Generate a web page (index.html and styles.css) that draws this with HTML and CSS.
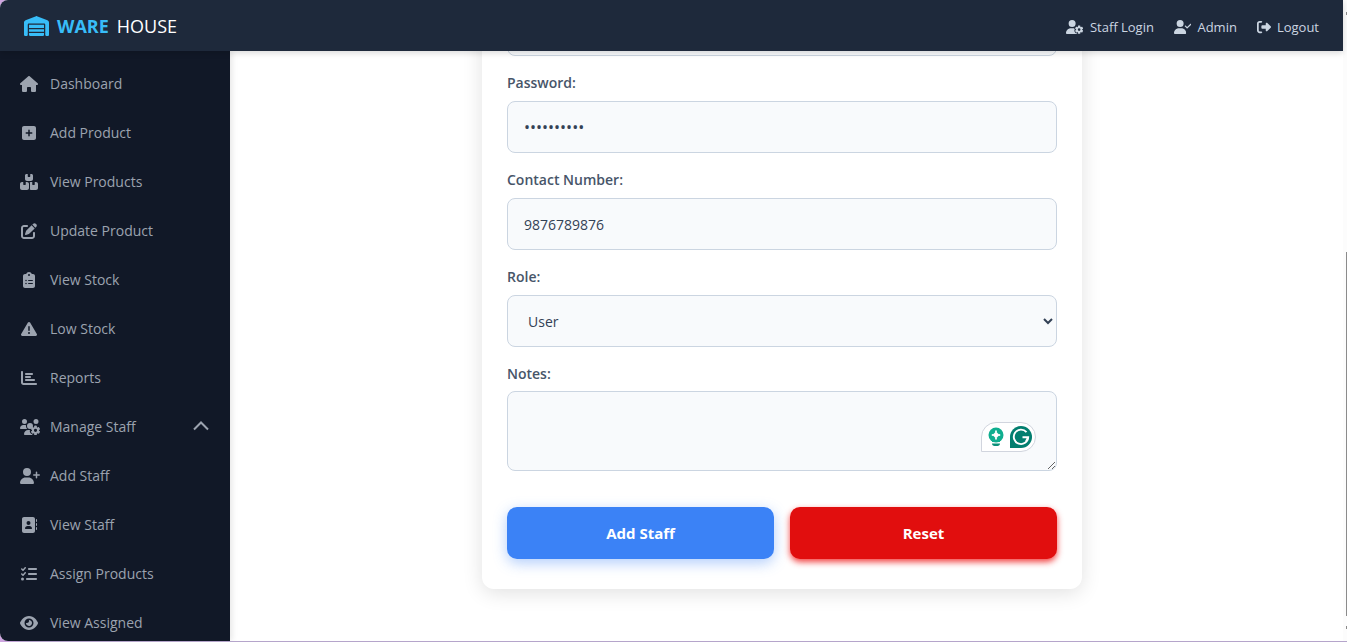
FILE: index.html
```html
<!DOCTYPE html>
<html lang="en">
<head>
<meta charset="utf-8">
<title>Ware House - Add Staff</title>
<link rel="stylesheet" href="styles.css">
</head>
<body>
<svg class="defs" aria-hidden="true">
  <symbol id="head" viewBox="0 0 448 512"><path d="M96 128a128 128 0 1 1 256 0A128 128 0 1 1 96 128zM0 482.3C0 383.8 79.8 304 178.3 304h91.4C368.2 304 448 383.8 448 482.3c0 16.4-13.3 29.7-29.7 29.7H29.7C13.3 512 0 498.7 0 482.3z"/></symbol>
  <path id="gear" d="M436 218.2c0-7 4.5-13.3 11.3-14.8c10.5-2.4 21.5-3.7 32.7-3.7s22.2 1.3 32.7 3.7c6.8 1.5 11.3 7.8 11.3 14.8v30.6c7.9 3.4 15.4 7.7 22.3 12.8l24.9-14.3c6.1-3.5 13.7-2.7 18.5 2.4c7.6 8.1 14.3 17.2 20.1 27.2s10.3 20.4 13.5 31c2.1 6.7-1.1 13.7-7.2 17.2l-25 14.4c.4 4 .7 8.1 .7 12.3s-.2 8.2-.7 12.3l25 14.4c6.1 3.5 9.2 10.5 7.2 17.2c-3.3 10.6-7.8 21-13.5 31s-12.5 19.1-20.1 27.2c-4.8 5.1-12.5 5.9-18.5 2.4l-24.9-14.3c-6.9 5.1-14.3 9.4-22.3 12.8l0 30.6c0 7-4.5 13.3-11.3 14.8c-10.5 2.4-21.5 3.7-32.7 3.7s-22.2-1.3-32.7-3.7c-6.8-1.5-11.3-7.8-11.3-14.8V454.8c-8-3.4-15.6-7.7-22.5-12.9l-24.7 14.3c-6.1 3.5-13.7 2.7-18.5-2.4c-7.6-8.1-14.3-17.2-20.1-27.2s-10.3-20.4-13.5-31c-2.1-6.7 1.1-13.7 7.2-17.2l24.8-14.3c-.4-4.1-.7-8.2-.7-12.4s.2-8.3 .7-12.4L343.8 325c-6.1-3.5-9.2-10.5-7.2-17.2c3.3-10.6 7.7-21 13.5-31s12.5-19.1 20.1-27.2c4.8-5.1 12.4-5.9 18.5-2.4l24.8 14.3c6.9-5.1 14.5-9.4 22.5-12.9V218.2zm92.1 133.5a48.1 48.1 0 1 0 -96.1 0 48.1 48.1 0 1 0 96.1 0z"/>
</svg>
<div class="window">
  <div class="page">
    <header class="topbar">
      <a class="brand" href="#">
        <svg class="brand-icon" viewBox="0 0 640 512"><path d="M0 488V171.3c0-26.2 15.9-49.7 40.2-59.4L308.1 4.8c7.6-3.1 16.1-3.1 23.8 0L599.8 111.9c24.3 9.7 40.2 33.3 40.2 59.4V488c0 13.3-10.7 24-24 24H568c-13.3 0-24-10.7-24-24V224c0-17.7-14.3-32-32-32H128c-17.7 0-32 14.3-32 32V488c0 13.3-10.7 24-24 24H24c-13.3 0-24-10.7-24-24zm488 24l-336 0c-13.3 0-24-10.7-24-24V432H512l0 56c0 13.3-10.7 24-24 24zM128 400V336H512v64H128zm0-96V224H512v80H128z"/></svg>
        <span class="brand-ware">WARE</span>
        <span class="brand-house">HOUSE</span>
      </a>
      <nav class="account">
        <a href="#"><svg viewBox="0 0 640 512"><path d="M224 0a128 128 0 1 1 0 256A128 128 0 1 1 224 0zM178.3 304h91.4c11.8 0 23.4 1.2 34.5 3.3c-2.1 18.5 7.4 35.6 21.8 44.8c-16.6 10.6-26.7 31.6-20 53.3c4 12.9 9.4 25.5 16.4 37.6s15.2 23.1 24.4 33c15.7 16.9 39.6 18.4 57.2 8.7v.9c0 9.2 2.7 18.5 7.9 26.3H29.7C13.3 512 0 498.7 0 482.3C0 383.8 79.8 304 178.3 304z"/><use href="#gear"/></svg><span>Staff Login</span></a>
        <a href="#"><svg viewBox="0 0 640 512"><use href="#head" width="448" height="512"/><path d="M625 177L497 305c-9.4 9.4-24.6 9.4-33.9 0l-64-64c-9.4-9.4-9.4-24.6 0-33.9s24.6-9.4 33.9 0l47 47L591 143c9.4-9.4 24.6-9.4 33.9 0s9.4 24.6 0 33.9z"/></svg><span>Admin</span></a>
        <a href="#"><svg viewBox="0 0 512 512"><path d="M377.9 105.9L500.7 228.7c7.2 7.2 11.3 17.1 11.3 27.3s-4.1 20.1-11.3 27.3L377.9 406.1c-6.4 6.4-15 9.9-24 9.9c-18.7 0-33.9-15.2-33.9-33.9l0-62.1-128 0c-17.7 0-32-14.3-32-32l0-64c0-17.7 14.3-32 32-32l128 0 0-62.1c0-18.7 15.2-33.9 33.9-33.9c9 0 17.6 3.6 24 9.9zM160 96L96 96c-17.7 0-32 14.3-32 32l0 256c0 17.7 14.3 32 32 32l64 0c17.7 0 32 14.3 32 32s-14.3 32-32 32l-64 0c-53 0-96-43-96-96L0 128C0 75 43 32 96 32l64 0c17.7 0 32 14.3 32 32s-14.3 32-32 32z"/></svg><span>Logout</span></a>
      </nav>
    </header>
    <div class="body">
      <nav class="sidebar">
        <a href="#"><span class="icon"><svg viewBox="0 0 576 512"><path d="M575.8 255.5c0 18-15 32.1-32 32.1h-32l.7 160.2c0 2.7-.2 5.4-.5 8.1V472c0 22.1-17.9 40-40 40H456c-1.1 0-2.2 0-3.3-.1c-1.4 .1-2.8 .1-4.2 .1H416 392c-22.1 0-40-17.9-40-40V448 384c0-17.7-14.3-32-32-32H256c-17.7 0-32 14.3-32 32v64 24c0 22.1-17.9 40-40 40H160 128.1c-1.5 0-3-.1-4.5-.2c-1.2 .1-2.4 .2-3.6 .2H104c-22.1 0-40-17.9-40-40V360c0-.9 0-1.9 .1-2.8V287.6H32c-18 0-32-14-32-32.1c0-9 3-17 10-24L266.4 8c7-7 15-8 22-8s15 2 21 7L564.8 231.5c8 7 12 15 11 24z"/></svg></span>Dashboard</a>
        <a href="#"><span class="icon"><svg viewBox="0 0 448 512"><path d="M64 32C28.7 32 0 60.7 0 96V416c0 35.3 28.7 64 64 64H384c35.3 0 64-28.7 64-64V96c0-35.3-28.7-64-64-64H64zM200 344V280H136c-13.3 0-24-10.7-24-24s10.7-24 24-24h64V168c0-13.3 10.7-24 24-24s24 10.7 24 24v64h64c13.3 0 24 10.7 24 24s-10.7 24-24 24H248v64c0 13.3-10.7 24-24 24s-24-10.7-24-24z"/></svg></span>Add Product</a>
        <a href="#"><span class="icon"><svg viewBox="0 0 576 512"><path d="M248 0H208c-26.5 0-48 21.5-48 48V160c0 35.3 28.7 64 64 64H352c35.3 0 64-28.7 64-64V48c0-26.5-21.5-48-48-48H328V80c0 8.8-7.2 16-16 16H264c-8.8 0-16-7.2-16-16V0zM64 256c-35.3 0-64 28.7-64 64V448c0 35.3 28.7 64 64 64H224c35.3 0 64-28.7 64-64V320c0-35.3-28.7-64-64-64H184v80c0 8.8-7.2 16-16 16H120c-8.8 0-16-7.2-16-16V256H64zM352 512H512c35.3 0 64-28.7 64-64V320c0-35.3-28.7-64-64-64H472v80c0 8.8-7.2 16-16 16H408c-8.8 0-16-7.2-16-16V256H352c-15 0-28.8 5.1-39.7 13.8c4.9 10.4 7.7 22 7.7 34.2V464c0 12.2-2.8 23.8-7.7 34.2C323.2 506.9 337 512 352 512z"/></svg></span>View Products</a>
        <a href="#"><span class="icon"><svg viewBox="0 0 512 512"><path d="M471.6 21.7c-21.9-21.9-57.3-21.9-79.2 0L362.3 51.7l97.9 97.9 30.1-30.1c21.9-21.9 21.9-57.3 0-79.2L471.6 21.7zm-299.2 220c-6.1 6.1-10.8 13.6-13.5 21.9l-29.6 88.8c-2.9 8.6-.6 18.1 5.8 24.6s15.9 8.7 24.6 5.8l88.8-29.6c8.2-2.7 15.7-7.4 21.9-13.5L437.7 172.3 339.7 74.3 172.4 241.7zM96 64C43 64 0 107 0 160V416c0 53 43 96 96 96H352c53 0 96-43 96-96V320c0-17.7-14.3-32-32-32s-32 14.3-32 32v96c0 17.7-14.3 32-32 32H96c-17.7 0-32-14.3-32-32V160c0-17.7 14.3-32 32-32h96c17.7 0 32-14.3 32-32s-14.3-32-32-32H96z"/></svg></span>Update Product</a>
        <a href="#"><span class="icon"><svg viewBox="0 0 384 512"><path d="M192 0c-41.8 0-77.4 26.7-90.5 64H64C28.7 64 0 92.7 0 128V448c0 35.3 28.7 64 64 64H320c35.3 0 64-28.7 64-64V128c0-35.3-28.7-64-64-64H282.5C269.4 26.7 233.8 0 192 0zm0 64a32 32 0 1 1 0 64 32 32 0 1 1 0-64zM72 272a24 24 0 1 1 48 0 24 24 0 1 1 -48 0zm104-16H304c8.8 0 16 7.2 16 16s-7.2 16-16 16H176c-8.8 0-16-7.2-16-16s7.2-16 16-16zM72 368a24 24 0 1 1 48 0 24 24 0 1 1 -48 0zm88 0c0-8.8 7.2-16 16-16H304c8.8 0 16 7.2 16 16s-7.2 16-16 16H176c-8.8 0-16-7.2-16-16z"/></svg></span>View Stock</a>
        <a href="#"><span class="icon"><svg viewBox="0 0 512 512"><path d="M256 32c14.2 0 27.3 7.5 34.5 19.8l216 368c7.3 12.4 7.3 27.7 .2 40.1S486.3 480 472 480H40c-14.3 0-27.6-7.7-34.7-20.1s-7-27.8 .2-40.1l216-368C228.7 39.5 241.8 32 256 32zm0 128c-13.3 0-24 10.7-24 24V296c0 13.3 10.7 24 24 24s24-10.7 24-24V184c0-13.3-10.7-24-24-24zm32 224a32 32 0 1 0 -64 0 32 32 0 1 0 64 0z"/></svg></span>Low Stock</a>
        <a href="#"><span class="icon"><svg viewBox="0 0 512 512"><path d="M32 32c17.7 0 32 14.3 32 32V400c0 8.8 7.2 16 16 16H480c17.7 0 32 14.3 32 32s-14.3 32-32 32H80c-44.2 0-80-35.8-80-80V64C0 46.3 14.3 32 32 32zm96 96c0-17.7 14.3-32 32-32l192 0c17.7 0 32 14.3 32 32s-14.3 32-32 32H160c-17.7 0-32-14.3-32-32zm32 64H288c17.7 0 32 14.3 32 32s-14.3 32-32 32H160c-17.7 0-32-14.3-32-32s14.3-32 32-32zm0 96H416c17.7 0 32 14.3 32 32s-14.3 32-32 32H160c-17.7 0-32-14.3-32-32s14.3-32 32-32z"/></svg></span>Reports</a>
        <a href="#"><span class="icon"><svg viewBox="0 0 640 512"><path d="M144 160A80 80 0 1 0 144 0a80 80 0 1 0 0 160zm368 0A80 80 0 1 0 512 0a80 80 0 1 0 0 160zM0 298.7C0 310.4 9.6 320 21.3 320H234.7c-26.6-23.5-43.3-57.8-43.3-96c0-7.6 .7-15 1.9-22.3c-13.6-6.3-28.7-9.7-44.6-9.7H106.7C47.8 192 0 239.8 0 298.7zM320 320a96 96 0 1 0 0-192 96 96 0 1 0 0 192zM261.3 352C187.7 352 128 411.7 128 485.3c0 14.7 11.9 26.7 26.7 26.7H400c-8-12-10-22-10-30c-14 2-28-3-38-14c-22-25-36-52-40-78c-2-14 4-28 14-38z"/><use href="#gear" x="16" y="12"/></svg></span>Manage Staff
          <svg class="chevron" viewBox="0 0 16 12"><path d="M1 8.500L8 1.500L15 8.500"/></svg></a>
        <a href="#"><span class="icon"><svg viewBox="0 0 640 512"><use href="#head" width="448" height="512"/><path d="M504 312V248H440c-13.3 0-24-10.7-24-24s10.7-24 24-24h64V136c0-13.3 10.7-24 24-24s24 10.7 24 24v64h64c13.3 0 24 10.7 24 24s-10.7 24-24 24H552v64c0 13.3-10.7 24-24 24s-24-10.7-24-24z"/></svg></span>Add Staff</a>
        <a href="#"><span class="icon"><svg viewBox="0 0 512 512"><path d="M96 0C60.7 0 32 28.7 32 64V448c0 35.3 28.7 64 64 64H384c35.3 0 64-28.7 64-64V64c0-35.3-28.7-64-64-64H96zM208 288h64c44.2 0 80 35.8 80 80c0 8.8-7.2 16-16 16H144c-8.8 0-16-7.2-16-16c0-44.2 35.8-80 80-80zm-32-96a64 64 0 1 1 128 0 64 64 0 1 1 -128 0zM512 80c0-8.8-7.2-16-16-16s-16 7.2-16 16v64c0 8.8 7.2 16 16 16s16-7.2 16-16V80zM496 192c-8.8 0-16 7.2-16 16v64c0 8.8 7.2 16 16 16s16-7.2 16-16V208c0-8.8-7.2-16-16-16zm16 144c0-8.8-7.2-16-16-16s-16 7.2-16 16v64c0 8.8 7.2 16 16 16s16-7.2 16-16V336z"/></svg></span>View Staff</a>
        <a href="#"><span class="icon"><svg viewBox="0 0 512 512"><path d="M152.1 38.2c9.9 8.9 10.7 24 1.8 33.9l-72 80c-4.4 4.9-10.6 7.8-17.2 7.9s-12.9-2.4-17.6-7L7 113C-2.3 103.6-2.3 88.4 7 79s24.6-9.4 33.9 0l22.1 22.1 55.1-61.2c8.9-9.9 24-10.7 33.9-1.8zm0 160c9.9 8.9 10.7 24 1.8 33.9l-72 80c-4.4 4.9-10.6 7.8-17.2 7.9s-12.9-2.4-17.6-7L7 273c-9.4-9.4-9.4-24.6 0-33.9s24.6-9.4 33.9 0l22.1 22.1 55.1-61.2c8.9-9.9 24-10.7 33.9-1.8zM224 96c0-17.7 14.3-32 32-32H480c17.7 0 32 14.3 32 32s-14.3 32-32 32H256c-17.7 0-32-14.3-32-32zm0 160c0-17.7 14.3-32 32-32H480c17.7 0 32 14.3 32 32s-14.3 32-32 32H256c-17.7 0-32-14.3-32-32zM160 416c0-17.7 14.3-32 32-32H480c17.7 0 32 14.3 32 32s-14.3 32-32 32H192c-17.7 0-32-14.3-32-32zM48 368a48 48 0 1 1 0 96 48 48 0 1 1 0-96z"/></svg></span>Assign Products</a>
        <a href="#"><span class="icon"><svg viewBox="0 0 576 512"><path d="M288 32c-80.8 0-145.5 36.8-192.6 80.6C48.6 156 17.3 208 2.5 243.7c-3.3 7.9-3.3 16.7 0 24.6C17.3 304 48.6 356 95.4 399.4C142.5 443.2 207.2 480 288 480s145.5-36.8 192.6-80.6c46.8-43.5 78.1-95.4 93-131.1c3.3-7.9 3.3-16.7 0-24.6c-14.9-35.7-46.2-87.7-93-131.1C433.5 68.8 368.8 32 288 32zM144 256a144 144 0 1 1 288 0 144 144 0 1 1 -288 0zm144-64c0 35.3-28.7 64-64 64c-7.1 0-13.9-1.2-20.3-3.3c-5.5-1.8-11.9 1.6-11.7 7.4c.3 6.9 1.3 13.8 3.2 20.7c13.7 51.2 66.4 81.6 117.6 67.9s81.6-66.4 67.9-117.6c-11.1-41.5-47.8-69.4-88.6-71.1c-5.8-.2-9.2 6.1-7.4 11.7c2.1 6.4 3.3 13.2 3.3 20.3z"/></svg></span>View Assigned</a>
      </nav>
      <main class="content">
        <form class="card">
          <div class="field">
            <input type="email" aria-label="Email">
          </div>
          <div class="field">
            <label for="password">Password:</label>
            <input id="password" type="password" value="abcdefghij">
          </div>
          <div class="field">
            <label for="contact">Contact Number:</label>
            <input id="contact" type="text" value="9876789876">
          </div>
          <div class="field">
            <label for="role">Role:</label>
            <select id="role"><option>User</option><option>Admin</option></select>
          </div>
          <div class="field notes">
            <label for="notes">Notes:</label>
            <textarea id="notes"></textarea>
            <div class="assistant">
              <svg class="bulb" viewBox="0 0 16 20"><circle cx="8" cy="8" r="7.5" fill="#0fae8f"/><path d="M4 13h8v2H4z" fill="#0fae8f"/><path d="M8 3.500C8.600 6.300 9.400 7.200 12.200 8C9.400 8.800 8.600 9.700 8 12.500C7.400 9.700 6.600 8.800 3.800 8C6.600 7.200 7.400 6.300 8 3.500z" fill="#fff" stroke="#fff"/><path d="M4 16.500h8c0 1.500-1 2.500-2.500 2.500h-3C5 19 4 18 4 16.500z" fill="#0b8f78"/></svg>
              <svg class="mark" viewBox="0 0 22 22"><path d="M0 22V11A11 11 0 1 1 11 22z" fill="#027e6f"/><path d="M16.500 6.200A7.200 7.200 0 1 0 18.200 11.200H12.500M18.200 11.200L16 15.500" fill="none" stroke="#fff" stroke-width="1.900"/></svg>
            </div>
          </div>
          <div class="actions">
            <button class="btn primary" type="submit">Add Staff</button>
            <button class="btn danger" type="reset">Reset</button>
          </div>
        </form>
      </main>
    </div>
  </div>
  <div class="scrollbar"><span class="arrow"></span><span class="thumb"></span><span class="arrow"></span></div>
</div>
</body>
</html>
```
FILE: styles.css
```css
* { box-sizing: border-box; }
body {
  margin: 0;
  height: 100vh;
  padding-bottom: 1px;
  background: linear-gradient(90deg, #d0a5e2, #b5a5cb 2%);
  font-family: "Open Sans", "Noto Sans", sans-serif;
  color: #334155;
  overflow: hidden;
}
.defs { position: absolute; width: 0; height: 0; }
svg { fill: currentColor; flex: none; }
a { color: inherit; text-decoration: none; }

.window { display: flex; height: 100%; border-radius: 8px 0 0 8px; overflow: hidden; background: #fff; }
.page { flex: 1; min-width: 0; display: flex; flex-direction: column; }

.topbar {
  position: relative;
  z-index: 1;
  display: flex;
  align-items: center;
  justify-content: space-between;
  flex: none;
  height: 51px;
  padding: 1px 24px 0;
  background: #1e293b;
  box-shadow: 0 2px 6px rgba(0, 0, 0, .15);
}
.brand { display: flex; align-items: center; gap: 8px; font-size: 18px; color: #fff; }
.brand-icon { width: 25px; height: 20px; }
.brand-icon, .brand-ware { color: #38bdf8; }
.brand-ware { font-weight: 700; }
.account { display: flex; gap: 20px; padding-top: 2px; font-size: 13px; color: #cbd5e1; }
.account a { display: flex; align-items: center; gap: 6px; }
.account svg { height: 14px; }

.body { flex: 1; min-height: 0; display: flex; }
.sidebar {
  flex: none;
  width: 230px;
  padding-top: 8px;
  overflow: hidden;
  background: #111827;
  color: #9ca3af;
  box-shadow: 2px 0 6px rgba(0, 0, 0, .1);
}
.sidebar a { display: flex; align-items: center; gap: 12px; height: 49px; padding: 0 21px 0 20px; font-size: 14px; font-weight: 500; }
.icon { display: flex; justify-content: safe center; flex: none; width: 18px; }
.icon svg { height: 16px; }
.chevron { width: 16px; height: 12px; margin-left: auto; fill: none; stroke: currentColor; stroke-width: 2; }

.content {
  flex: 1;
  min-width: 0;
  display: flex;
  flex-direction: column;
  justify-content: flex-end;
  align-items: center;
  padding: 0 9px 52px 0;
  overflow: hidden;
}
.card {
  flex: none;
  width: 100%;
  max-width: 600px;
  padding: 30px 25px;
  border-radius: 12px;
  background: #fff;
  box-shadow: 0 4px 20px rgba(0, 0, 0, .12);
}
.field { position: relative; display: flex; flex-direction: column; margin-bottom: 17px; }
.field label { height: 28px; line-height: 20px; font-size: 14px; font-weight: 600; color: #475569; }
.field input, .field select, .field textarea {
  width: 100%;
  height: 52px;
  padding: 0 16px;
  border: 1px solid #cbd5e1;
  border-radius: 8px;
  background: #f8fafc;
  color: #334155;
  font: 14px "Open Sans", "Noto Sans", sans-serif;
}
.field input[type="password"] { font-size: 16px; }
.field textarea { height: 80px; }
.assistant {
  position: absolute;
  right: 21px;
  bottom: 19px;
  display: flex;
  align-items: center;
  gap: 6px;
  padding: 3px 3px 3px 6px;
  border: 1px solid #d1d5de;
  border-radius: 15px 15px 15px 0;
  background: #fff;
}
.bulb { width: 16px; height: 20px; }
.mark { width: 22px; height: 22px; }
.notes { margin-bottom: 36px; }
.notes label { height: 27px; }
.actions { display: flex; gap: 16px; }
.btn {
  flex: 1;
  height: 52px;
  border: 0;
  border-radius: 10px;
  color: #fff;
  font: 700 15px "Open Sans", "Noto Sans", sans-serif;
}
.primary { background: #3b82f6; box-shadow: 0 4px 14px rgba(59, 130, 246, .4); }
.danger { background: #e10e0e; box-shadow: 0 3px 6px rgba(239, 20, 20, .8); }

.scrollbar { flex: none; width: 4px; display: flex; flex-direction: column; align-items: flex-end; padding: 12px 0; background: #fcfcfc; }
.arrow { width: 1px; height: 3px; background: #8b8b8b; }
.thumb { width: 1px; height: 59%; margin: auto 0 10px; background: #8b8b8b; }
```
